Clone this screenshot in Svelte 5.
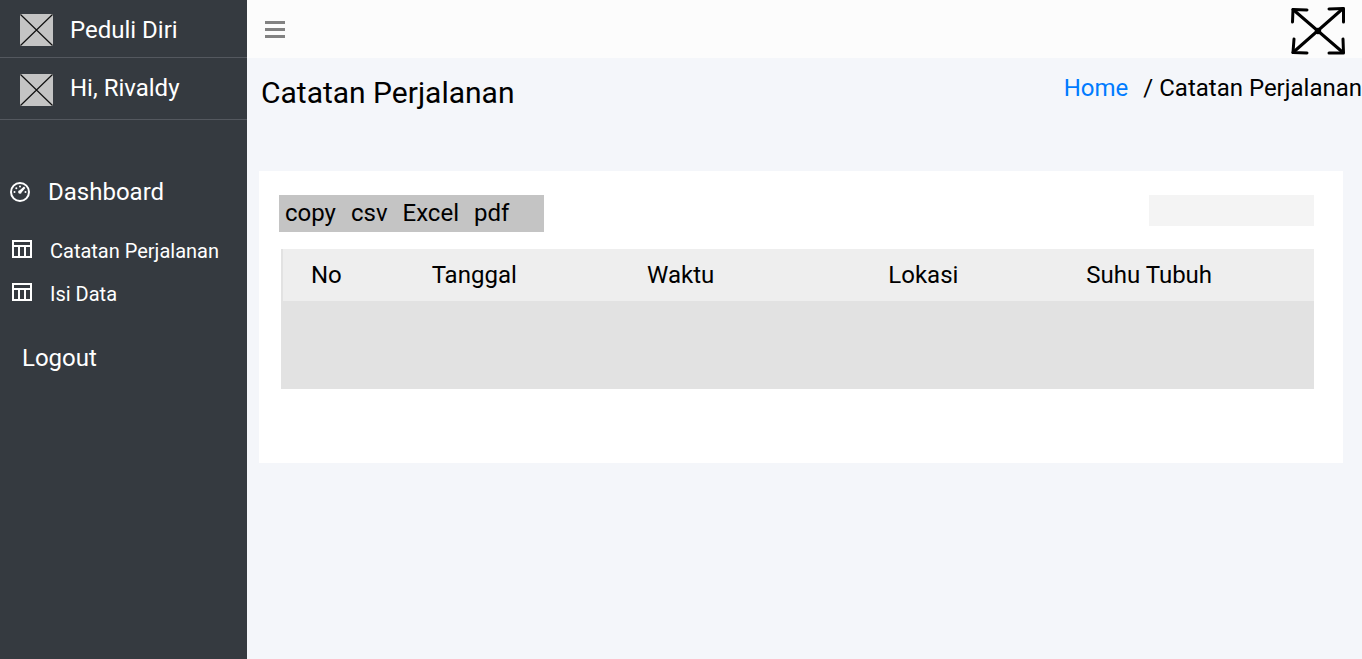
<script>
  const links = ['Catatan Perjalanan', 'Isi Data'];
  const exportsTo = ['copy', 'csv', 'Excel', 'pdf'];
  const columns = [
    { name: 'No', width: 11.7 },
    { name: 'Tanggal', width: 20.9 },
    { name: 'Waktu', width: 23.4 },
    { name: 'Lokasi', width: 19.2 },
    { name: 'Suhu Tubuh', width: 24.8 }
  ];
</script>

{#snippet placeholder()}
  <svg class="placeholder" width="34" height="33" viewBox="0 0 34 33" aria-hidden="true">
    <rect width="33" height="32" rx="1" fill="#c4c4c4" />
    <path d="M.5.5 32.5 31.5M32.5.5.5 31.5" stroke="#111" stroke-width="1.2" />
  </svg>
{/snippet}

<div class="page">
  <aside class="sidebar">
    <div class="brand">{@render placeholder()}<span>Peduli Diri</span></div>
    <div class="user">{@render placeholder()}<span>Hi, Rivaldy</span></div>
    <nav>
      <a class="dashboard" href="#dashboard">
        <svg width="20" height="20" viewBox="0 0 20 20" fill="#fff" aria-hidden="true">
          <circle cx="10" cy="10" r="9" fill="none" stroke="#fff" stroke-width="2" />
          <circle cx="4.5" cy="10" r="1" />
          <circle cx="6.3" cy="6.3" r="1" />
          <circle cx="10" cy="4.5" r="1" />
          <circle cx="15.5" cy="10" r="1" />
          <path d="M14 4.600 15.400 6 11.700 10.200A1.800 1.800 0 1 1 9.700 8.200Z" />
        </svg>
        <span>Dashboard</span>
      </a>
      {#each links as link}
        <a class="sub" href="#{link.replace(' ', '-').toLowerCase()}">
          <svg width="20" height="18" viewBox="0 0 20 18" aria-hidden="true">
            <path
              fill="#fff"
              fill-rule="evenodd"
              d="M0 0H20V18H0ZM2 2V5H18V2ZM2 7V16H6V7ZM8 7V16H12V7ZM14 7V16H18V7Z"
            />
          </svg>
          <span>{link}</span>
        </a>
      {/each}
      <a class="logout" href="#logout">Logout</a>
    </nav>
  </aside>

  <div class="main">
    <header>
      <button class="icon" aria-label="Menu">
        <svg width="20" height="17" viewBox="0 0 20 17" aria-hidden="true">
          <path d="M0 0H20V3H0ZM0 7H20V10H0ZM0 14H20V17H0Z" fill="#828282" />
        </svg>
      </button>
      <button class="icon" aria-label="Fullscreen">
        <svg
          width="56"
          height="50"
          viewBox="0 0 56 50"
          fill="none"
          stroke="#000"
          stroke-width="3"
          stroke-linecap="round"
          stroke-linejoin="round"
          aria-hidden="true"
        >
          <path d="M3 5.500 53 48.500M53 4.500 3 48.500" />
          <path d="M17 6 3 5.500 2.500 18M39 5 53.500 4.500V18M4 35 3 48.500 17 49M39 49H53.500L53 35" />
          <circle cx="28" cy="27" r="2.200" fill="#000" stroke-width="2" />
        </svg>
      </button>
    </header>

    <div class="heading">
      <h1>Catatan Perjalanan</h1>
      <div class="crumbs"><a href="#home">Home</a><span>/ Catatan Perjalanan</span></div>
    </div>

    <section class="card">
      <div class="tools">
        <div class="exports">
          {#each exportsTo as format}
            <button>{format}</button>
          {/each}
        </div>
        <input type="search" aria-label="Search" />
      </div>
      <table>
        <colgroup>
          {#each columns as column}
            <col style="width: {column.width}%" />
          {/each}
        </colgroup>
        <thead>
          <tr>
            {#each columns as column}
              <th scope="col">{column.name}</th>
            {/each}
          </tr>
        </thead>
        <tbody>
          <tr><td colspan={columns.length}></td></tr>
        </tbody>
      </table>
    </section>
  </div>
</div>

<style>
  :global(body) {
    margin: 0;
  }
  .page {
    display: flex;
    min-height: 100vh;
    background: #f4f6fa;
    color: #000;
    font: 24px/28px Roboto, sans-serif;
  }
  a {
    color: inherit;
    text-decoration: none;
  }
  button {
    padding: 0;
    border: 0;
    background: none;
    color: inherit;
    font: inherit;
    cursor: pointer;
  }
  svg {
    display: block;
    flex: none;
    overflow: visible;
  }
  .sidebar {
    box-sizing: border-box;
    flex: 0 0 247px;
    background: #353a40;
    color: #fff;
  }
  .brand,
  .user {
    display: flex;
    gap: 16px;
    padding: 14px 20px 10px;
    border-bottom: 1px solid #54585f;
  }
  .brand span {
    padding-top: 2px;
  }
  .user {
    padding: 16px 20px 12px;
  }
  nav {
    display: flex;
    flex-direction: column;
    padding-top: 58px;
  }
  nav a {
    display: flex;
    align-items: center;
  }
  .dashboard {
    gap: 18px;
    padding-left: 10px;
    margin-bottom: 23px;
  }
  .sub {
    gap: 18px;
    padding-left: 12px;
    height: 43px;
    font-size: 20px;
  }
  .sub svg {
    margin-bottom: 4px;
  }
  .logout {
    padding: 29px 22px;
  }
  .main {
    flex: 1;
    min-width: 0;
  }
  header {
    display: flex;
    align-items: center;
    justify-content: space-between;
    height: 58px;
    padding: 0 16px 0 18px;
    background: #fcfcfc;
  }
  .heading {
    display: flex;
    justify-content: space-between;
    padding: 16px 0 60px 14px;
  }
  h1 {
    margin: 0;
    font-size: 30px;
    font-weight: 400;
    line-height: 37px;
  }
  .crumbs {
    display: flex;
    gap: 15px;
    white-space: nowrap;
  }
  .crumbs a {
    color: #007bff;
  }
  .card {
    margin: 0 19px 0 12px;
    padding: 24px 29px 74px 20px;
    background: #fff;
  }
  .tools {
    display: flex;
    align-items: flex-start;
    justify-content: space-between;
    margin-bottom: 17px;
  }
  .exports {
    box-sizing: border-box;
    display: flex;
    gap: 15px;
    width: 265px;
    height: 37px;
    padding: 0 6px 2px;
    background: #c4c4c4;
  }
  input {
    box-sizing: border-box;
    width: 165px;
    height: 31px;
    padding: 0 8px;
    border: 0;
    border-radius: 0;
    background: #f4f4f4;
    font: inherit;
    font-size: 16px;
    appearance: none;
  }
  table {
    width: calc(100% - 2px);
    margin-left: 2px;
    border-collapse: separate;
    border-spacing: 0;
    border-left: 2px solid #e2e2e2;
    table-layout: fixed;
    background: #e2e2e2;
  }
  th {
    height: 52px;
    padding: 0 0 0 28px;
    background: #eee;
    font-weight: 400;
    text-align: left;
  }
  td {
    height: 88px;
    padding: 0;
  }
</style>
